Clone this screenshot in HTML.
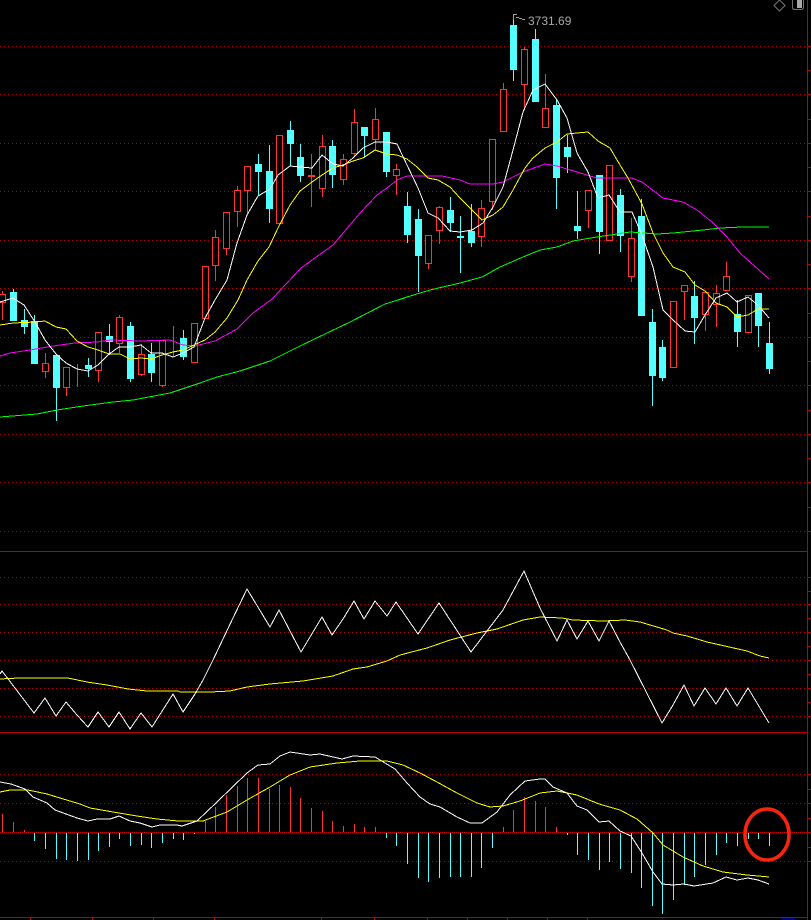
<!DOCTYPE html>
<html><head><meta charset="utf-8"><style>
html,body{margin:0;padding:0;background:#000;width:811px;height:920px;overflow:hidden}
svg{display:block;position:absolute;left:0;top:0}
</style></head><body>
<svg width="811" height="920" viewBox="0 0 811 920" xmlns="http://www.w3.org/2000/svg">
<rect width="811" height="920" fill="#000"/>
<g shape-rendering="crispEdges" fill="none">
<g stroke="#b00000" stroke-dasharray="1 3">
<path d="M0 46.5H807M0 94.5H807M0 143.5H807M0 191.5H807M0 240.5H807M0 288.5H807M0 337.5H807M0 385.5H807M0 434.5H807M0 482.5H807M0 531.5H807"/>
<path d="M0 577.5H807M0 604.5H807M0 632.5H807M0 660.5H807M0 688.5H807M0 716.5H807"/>
<path d="M0 774.5H807M0 803.5H807M0 861.5H807"/>
</g>
<path d="M0 832.5H807" stroke="#d00000" stroke-dasharray="1 1"/>
<path d="M0 551.5H807M0 732.5H807M0 917.5H807M807.5 0V920" stroke="#c00000"/>
<path stroke="#c00000" d="M808 46.5H811M808 70.5H811M808 94.5H811M808 119.5H811M808 143.5H811M808 167.5H811M808 191.5H811M808 216.5H811M808 240.5H811M808 264.5H811M808 288.5H811M808 313.5H811M808 337.5H811M808 361.5H811M808 385.5H811M808 410.5H811M808 434.5H811M808 458.5H811M808 482.5H811M808 507.5H811M808 531.5H811M808 577.5H811M808 591.5H811M808 604.5H811M808 618.5H811M808 632.5H811M808 646.5H811M808 660.5H811M808 674.5H811M808 688.5H811M808 702.5H811M808 716.5H811M808 774.5H811M808 789.5H811M808 803.5H811M808 818.5H811M808 832.5H811M808 847.5H811M808 861.5H811"/>
<path stroke="#c00000" d="M30.5 918V920M92.5 918V920M153.5 918V920M214.5 918V920M321.5 918V920M374.5 918V920M427.5 918V920M467.5 918V920M507.5 918V920M547.5 918V920M587.5 918V920"/>
<rect x="781" y="918" width="14" height="2" fill="#000080"/>

<!-- red candles -->
<path stroke="#ff3232" fill="#000" d="M-.5 294.5h6v8h-6zM42.5 363.5h6v8h-6zM63.5 367.5h6v20h-6zM95.5 332.5h6v38h-6zM116.5 317.5h6v26h-6zM138.5 354.5h6v20h-6zM159.5 340.5h6v45h-6zM191.5 323.5h6v39h-6zM202.5 266.5h6v52h-6zM212.5 237.5h6v28h-6zM223.5 212.5h6v36h-6zM234.5 190.5h6v21h-6zM244.5 166.5h6v24h-6zM276.5 135.5h6v88h-6zM308.5 175.5h6v1h-6zM319.5 146.5h6v42h-6zM340.5 159.5h6v20h-6zM351.5 122.5h6v31h-6zM372.5 119.5h6v20h-6zM393.5 169.5h6v6h-6zM425.5 235.5h6v28h-6zM436.5 207.5h6v23h-6zM478.5 208.5h6v28h-6zM489.5 139.5h6v62h-6zM500.5 89.5h6v42h-6zM521.5 49.5h6v35h-6zM542.5 108.5h6v19h-6zM585.5 190.5h6v20h-6zM606.5 165.5h6v75h-6zM628.5 238.5h6v38h-6zM670.5 301.5h6v66h-6zM681.5 285.5h6v6h-6zM702.5 292.5h6v22h-6zM713.5 293.5h6v11h-6zM723.5 276.5h6v14h-6zM745.5 295.5h6v37h-6z"/>
<path stroke="#ff3232" d="M2.5 291V294M2.5 303V320M45.5 353V363M45.5 372V378M66.5 388V396M77.5 364V387M98.5 371V382M119.5 315V317M119.5 344V353M141.5 344V354M141.5 375V376M162.5 386V387M173.5 326V356M215.5 230V237M215.5 266V281M226.5 249V255M237.5 186V190M237.5 212V227M247.5 191V213M311.5 154V207M322.5 135V146M322.5 189V197M343.5 154V159M343.5 180V185M354.5 109V122M354.5 154V157M375.5 108V119M375.5 140V150M396.5 164V169M396.5 176V195M428.5 264V269M439.5 206V207M439.5 231V244M481.5 200V208M481.5 237V247M492.5 202V210M503.5 83V89M524.5 47V49M524.5 85V110M545.5 74V108M588.5 211V228M631.5 218V238M631.5 277V282M684.5 292V320M705.5 315V331M716.5 285V293M716.5 305V327M726.5 262V276"/>
<!-- cyan candles -->
<path stroke="#54ffff" d="M13.5 289V292M24.5 309V334M34.5 315V321M56.5 388V421M88.5 358V377M109.5 324V355M130.5 322V382M151.5 343V382M183.5 330V360M258.5 154V196M269.5 145V223M290.5 121V166M300.5 144V182M332.5 140V188M364.5 136V157M386.5 172V177M407.5 192V243M418.5 209V292M450.5 197V232M460.5 216V273M471.5 204V247M513.5 17V81M535.5 29V39M556.5 99V209M567.5 135V173M577.5 191V239M599.5 232V254M620.5 189V252M641.5 199V216M652.5 309V406M662.5 340V381M694.5 281V344M737.5 300V347M758.5 326V347M769.5 322V374"/>
<path fill="#54ffff" d="M10 292h7v29h-7zM21 320h7v7h-7zM31 321h7v43h-7zM53 355h7v33h-7zM85 365h7v4h-7zM106 336h7v6h-7zM127 326h7v53h-7zM148 354h7v19h-7zM180 338h7v19h-7zM255 164h7v8h-7zM266 171h7v38h-7zM287 130h7v14h-7zM297 157h7v19h-7zM329 146h7v29h-7zM361 127h7v9h-7zM383 132h7v40h-7zM404 206h7v29h-7zM415 219h7v37h-7zM447 210h7v13h-7zM457 236h7v2h-7zM468 231h7v12h-7zM510 25h7v45h-7zM532 39h7v63h-7zM553 105h7v73h-7zM564 147h7v10h-7zM574 226h7v5h-7zM596 175h7v57h-7zM617 195h7v41h-7zM638 216h7v100h-7zM649 322h7v54h-7zM659 347h7v31h-7zM691 296h7v22h-7zM734 314h7v18h-7zM755 293h7v33h-7zM766 343h7v26h-7z"/>

<!-- MA lines -->
<polyline stroke="#00ff00" points="0,417 37,414 57,410 83,406 113,402 133,400 170,393 200,383 217,377 240,371 270,361 300,346 350,322 385,304 398,300 407,297 430,290 460,283 482,277 500,267 523,257 540,250 557,247 573,241 597,237 630,232 657,234 673,233 703,230 720,228 743,227 769,227"/>
<polyline stroke="#ff00ff" points="0,356 10,353 30,350 53,346 75,343 97,342 110,340 140,341 170,340 183,345 195,346 215,341 237,329 253,313 272,299 301,268 333,245 360,213 377,195 387,188 397,180 407,176 442,176 460,180 470,184 493,184 503,182 523,172 545,164 557,166 577,172 597,178 632,178 642,182 663,198 683,202 697,210 712,222 727,237 740,253 769,279"/>
<polyline stroke="#ffff00" points="0,325 13,323 35,322 45,321 56,327 66,329 77,341 88,347 98,350 109,354 120,354 130,359 141,358 151,359 162,355 173,352 183,350 194,345 205,340 215,332 227,318 238,300 247,280 258,261 269,247 278,228 290,205 300,191 312,182 322,175 333,168 343,165 353,161 363,158 375,150 387,154 397,155 407,159 417,167 428,178 438,180 450,187 460,198 472,210 482,220 493,215 503,207 513,190 525,168 533,158 545,148 557,142 567,134 577,133 588,132 598,141 610,148 620,165 628,178 642,204 653,233 663,253 673,267 685,272 695,285 705,291 716,303 727,307 737,317 748,315 758,309 769,309"/>
<polyline stroke="#ffffff" points="0,302 13,298 24,305 35,322 45,340 56,354 66,363 77,369 88,371 98,365 109,354 119,347 130,347 141,345 151,353 162,353 173,357 183,353 194,347 205,318 215,300 227,280 237,243 247,215 258,196 270,189 278,175 290,166 300,167 312,168 322,155 333,164 343,166 353,158 363,148 375,142 387,142 397,144 407,165 418,188 428,213 438,218 450,231 460,232 472,230 483,223 493,207 503,187 513,150 523,112 533,90 545,84 557,100 567,118 577,153 588,172 598,198 609,195 620,212 632,212 642,235 653,267 663,310 673,320 685,331 695,332 705,315 716,298 727,293 737,302 748,297 758,305 769,318"/>

<!-- KDJ -->
<polyline stroke="#ffff00" points="0,679 19,678 30,678 68,678 87,682 107,685 128,689 147,691 178,691 180,692 210,692 230,691 247,687 270,684 303,681 333,676 353,669 367,667 387,661 400,655 427,648 450,640 477,633 497,629 523,620 540,617 562,618 573,620 603,621 625,620 640,622 667,630 673,633 687,636 707,642 747,651 760,656 769,658"/>
<polyline stroke="#ffffff" points="0,674 2,671 34,713 45,698 56,716 66,702 77,715 88,727 98,712 109,727 119,712 130,729 141,713 152,727 173,694 183,712 195,694 203,680 213,660 233,618 247,589 270,627 279,610 301,652 322,617 332,635 343,619 354,601 364,619 375,601 387,616 396,602 418,634 439,603 471,652 503,610 524,571 540,608 557,641 567,620 577,639 588,621 599,641 609,621 620,642 630,660 662,723 673,705 684,685 694,706 705,688 716,704 726,688 737,706 748,688 769,723"/>

<!-- MACD bars -->
<path stroke="#ff3232" d="M2.5 832V814M13.5 832V822M24.5 832V830M205.5 832V821M215.5 832V807M226.5 832V795M237.5 832V786M247.5 832V778M258.5 832V778M269.5 832V789M279.5 832V785M290.5 832V787M300.5 832V798M311.5 832V808M322.5 832V811M332.5 832V821M343.5 832V826M354.5 832V824M364.5 832V827M375.5 832V827M503.5 832V827M513.5 832V810M524.5 832V797M535.5 832V801M545.5 832V807M556.5 832V827"/>
<path stroke="#54ffff" d="M34.5 833V841M45.5 833V849M56.5 833V859M66.5 833V860M77.5 833V861M88.5 833V860M98.5 833V851M109.5 833V847M119.5 833V839M130.5 833V846M141.5 833V845M151.5 833V848M162.5 833V843M173.5 833V839M183.5 833V840M194.5 833V834M386.5 833V838M396.5 833V846M407.5 833V864M418.5 833V878M428.5 833V882M439.5 833V878M450.5 833V877M460.5 833V877M471.5 833V877M481.5 833V868M492.5 833V848M567.5 833V835M577.5 833V855M588.5 833V860M599.5 833V870M609.5 833V862M620.5 833V869M631.5 833V873M641.5 833V888M652.5 833V906M662.5 833V914M673.5 833V900M684.5 833V885M694.5 833V877M705.5 833V865M716.5 833V855M726.5 833V843M737.5 833V846M748.5 833V839M758.5 833V839M769.5 833V846"/>
<polyline stroke="#ffff00" points="0,792 10,790 28,790 47,794 60,798 80,804 90,808 113,812 137,816 157,819 178,821 203,821 227,812 247,800 270,787 290,775 310,767 337,763 360,761 387,761 403,765 420,773 437,782 457,793 477,803 490,807 503,806 520,801 540,793 557,791 577,795 599,804 620,810 637,819 653,833 663,845 683,857 703,866 723,872 747,875 769,877"/>
<polyline stroke="#ffffff" points="0,782 11,784 25,789 33,797 47,803 55,810 77,818 88,821 97,819 110,819 119,816 130,821 140,823 152,827 160,825 177,825 182,826 197,821 217,802 247,773 258,765 270,764 280,756 290,752 310,755 320,754 342,759 353,756 375,757 395,769 407,783 420,797 430,804 440,807 457,817 470,823 482,823 497,812 510,795 525,781 540,779 545,779 553,787 567,793 577,806 587,810 599,822 609,821 620,831 631,836 642,853 653,872 662,884 673,885 684,884 694,886 713,883 726,877 737,880 748,878 758,880 769,884"/>

<!-- top right icons -->
<path stroke="#707070" d="M779.5 0L785 5.5L779.5 11L774 5.5Z"/>
<path stroke="#707070" d="M792.5 0V7Q792.5 9.5 795 9.5H801Q803.5 9.5 803.5 7V0"/>
<rect x="797" y="0" width="5" height="8" fill="#a8a8a8"/>
<!-- flag -->
<path stroke="#a0a0a0" d="M513.5 14V20M513.5 14.5H517M516 17.5H519M519 18.5H522M522 19.5H525"/>
</g>
<text x="528" y="25" font-family="'Liberation Sans',sans-serif" font-size="12" fill="#a8a8a8">3731.69</text>
<ellipse cx="767" cy="834.5" rx="22" ry="25.5" fill="none" stroke="#f52510" stroke-width="3.6"/>
</svg>
</body></html>
